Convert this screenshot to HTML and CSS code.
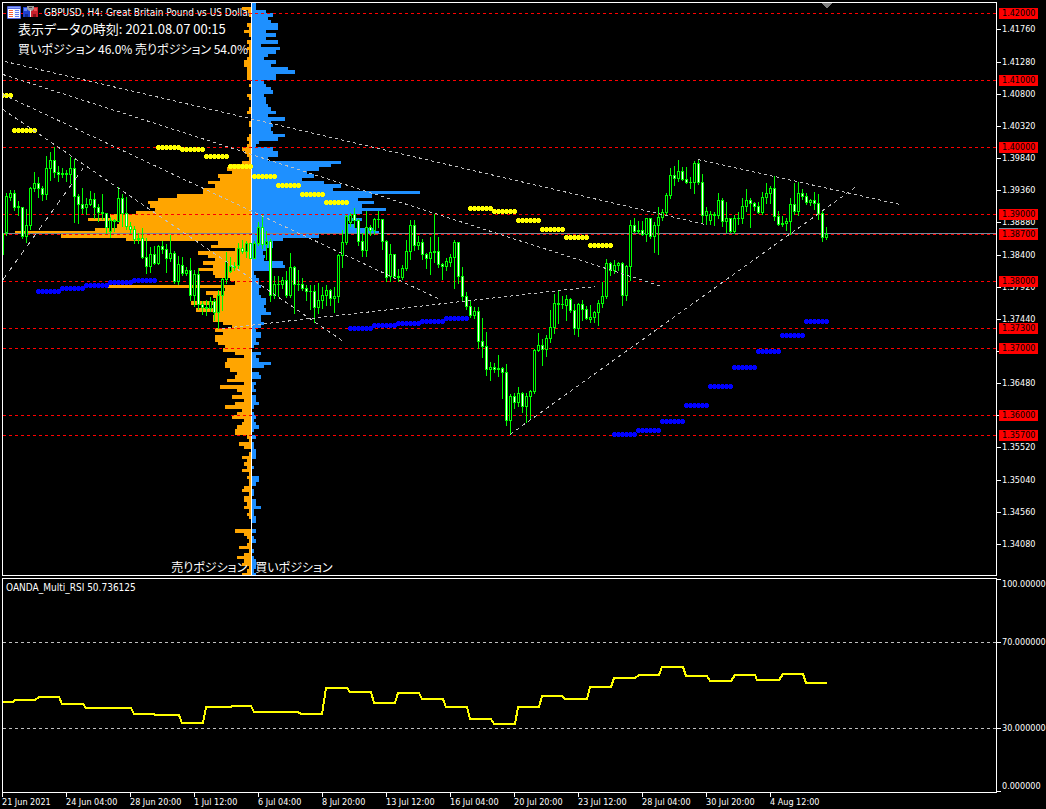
FILE: index.html
```html
<!DOCTYPE html>
<html lang="ja">
<head>
<meta charset="utf-8">
<meta name="viewport" content="width=device-width, initial-scale=1">
<title>GBPUSD, H4</title>
<link rel="stylesheet" href="styles.css">
</head>
<body>
<main class="terminal">
  <section class="pane pane-price" aria-label="GBPUSD H4">
    <div class="plot">
      <svg class="canvas" id="price" viewBox="3 3 993 572" preserveAspectRatio="none" aria-hidden="true"></svg>
      <header class="head">
        <div class="title-row">
          <button class="tool" type="button" aria-label="Depth of Market">
            <svg width="14" height="13" viewBox="0 0 14 13">
              <rect width="14" height="13" rx="1" fill="#5468e0"/>
              <rect x="1" y="1" width="12" height="1" fill="#86a4ff"/>
              <rect x="1" y="3" width="6" height="9" fill="#fff"/>
              <rect x="7" y="3" width="6" height="9" fill="#f2f4ff"/>
              <path d="M2 4.500h4M2 6.500h4M2 8.500h4M2 10.500h4" stroke="#f4603c"/>
              <path d="M8 4.500h4M8 6.500h4M8 8.500h4M8 10.500h4" stroke="#5f7cf4"/>
            </svg>
          </button>
          <button class="tool" type="button" aria-label="One Click Trading">
            <svg width="15" height="12" viewBox="0 0 15 12">
              <path d="M0 1h7v10H0z" fill="#2040d0"/>
              <path d="M8 1h7v10H8z" fill="#c8202c"/>
              <path d="M1 2h3v3H1z" fill="#5c86ff"/>
              <path d="M11 2h3v3h-3z" fill="#f05050"/>
              <path d="M4 0h7v3L9 5H6L4 3z" fill="#9c9c9c"/>
              <path d="M6 1h3v1H6z" fill="#404040"/>
              <path d="M7 4h1v7H7z" fill="#e4e4e4"/>
              <path d="M2 8h3v3H2z" fill="#102c90"/>
              <path d="M10 8h3v3h-3z" fill="#801018"/>
            </svg>
          </button>
          <h1 class="title">GBPUSD, H4: Great Britain Pound vs US Dollar</h1>
        </div>
        <p class="note">表示データの時刻: 2021.08.07 00:15</p>
        <p class="note note-ratio">買いポジション 46.0% 売りポジション 54.0%</p>
      </header>
      <footer class="sides">
        <span class="side-sell">売りポジション</span>
        <span class="side-buy">買いポジション</span>
      </footer>
    </div>
    <div class="scale" id="price-scale"></div>
  </section>
  <section class="pane pane-rsi" aria-label="OANDA Multi RSI">
    <div class="plot">
      <svg class="canvas" id="rsi" viewBox="3 579 993 213" preserveAspectRatio="none" aria-hidden="true"></svg>
      <h2 class="title title-rsi">OANDA_Multi_RSI 50.736125</h2>
    </div>
    <div class="scale" id="rsi-scale"></div>
  </section>
  <ol class="times">
    <li>21 Jun 2021</li><li>24 Jun 04:00</li><li>28 Jun 20:00</li><li>1 Jul 12:00</li>
    <li>6 Jul 04:00</li><li>8 Jul 20:00</li><li>13 Jul 12:00</li><li>16 Jul 04:00</li>
    <li>20 Jul 20:00</li><li>23 Jul 12:00</li><li>28 Jul 04:00</li><li>30 Jul 20:00</li>
    <li>4 Aug 12:00</li>
  </ol>
</main>
<script src="chart.js"></script>
</body>
</html>
```

FILE: styles.css
```css
* { box-sizing: border-box; }

body {
  margin: 0;
  background: #000;
  color: #fff;
  font: 9px/11px "DejaVu Sans Condensed", "DejaVu Sans", sans-serif;
}

h1, h2, p, ol { margin: 0; padding: 0; font: inherit; }

.terminal {
  display: flex;
  flex-direction: column;
  height: 100vh;
  padding: 2px 0 0 2px;
  overflow: hidden;
}

.pane {
  display: grid;
  grid-template-columns: minmax(0, 1fr) 49px;
  min-height: 0;
}
.pane-price { flex: 574 1 0; }
.pane-rsi { flex: 215 1 0; margin-top: 2px; }

.plot {
  position: relative;
  display: flex;
  flex-direction: column;
  justify-content: space-between;
  min-height: 0;
  border: 1px solid #fff;
}

.canvas {
  position: absolute;
  inset: 0;
  width: 100%;
  height: 100%;
  shape-rendering: crispEdges;
}

.head { padding: 3px 0 0 4px; }
.title-row { display: flex; align-items: flex-start; gap: 2px; height: 13px; }
.tool {
  display: flex;
  padding: 0;
  border: 0;
  background: none;
  position: relative;
}
.title { padding-left: 4px; font-size: 10px; line-height: 13px; white-space: nowrap; }
.title-rsi { padding: 2px 0 0 3px; }

.note, .sides {
  position: relative;
  font: 13px/20px "Noto Sans CJK JP", sans-serif;
  font-feature-settings: "palt";
}
.note { padding-left: 11px; }
.note-ratio, .sides { font-size: 12px; }
.sides { display: flex; line-height: 16px; }
.side-sell { width: 25%; padding-right: 4px; text-align: right; }
.side-buy { padding-left: 4px; }

.scale { position: relative; }
.mark {
  position: absolute;
  left: 0;
  display: flex;
  align-items: center;
  height: 11px;
  margin-top: -5px;
  padding-left: 5px;
}
.mark::before {
  content: "";
  position: absolute;
  left: 0;
  top: 5px;
  width: 4px;
  height: 1px;
  background: #fff;
}
.mark-first::before { top: 0; }
.mark-last::before { top: 10px; }
.level, .bid {
  position: absolute;
  left: 2px;
  width: 39px;
  height: 11px;
  margin-top: -5px;
  padding-left: 3px;
  background: #f00;
  color: #000;
}
.bid { background: #778899; }

.times {
  display: grid;
  grid-template-columns: repeat(13, minmax(0, 64fr)) minmax(0, 163fr);
  margin-right: 49px;
  height: 16px;
  list-style: none;
  white-space: nowrap;
}
.times li {
  padding-top: 4px;
  background: linear-gradient(#fff, #fff) 0 0 / 1px 4px no-repeat;
}
```

FILE: chart.js
```js
const NS = "http://www.w3.org/2000/svg";

function draw(svg, tag, attrs) {
  const el = document.createElementNS(NS, tag);
  for (const k in attrs) el.setAttribute(k, attrs[k]);
  svg.appendChild(el);
}
const rect = (svg, x, y, width, height, fill) => draw(svg, "rect", { x, y, width, height, fill });

const price = document.getElementById("price");

// Position profile: one row for each 0.0005, top to bottom
const ROW = 3.35, FIRST = 3.3, AXIS = 251;
const sell = [0,9,3,2,0,0,4,2,7,2,0,4,2,4,2,2,4,7,7,4,4,4,4,0,2,0,0,4,2,0,0,2,4,0,0,2,2,0,0,2,4,2,4,
  9,6,4,2,9,21,24,19,33,31,43,36,48,48,74,93,103,101,96,115,141,163,132,134,156,236,190,125,33,40,16,53,43,36,48,38,52,38,36,21,16,146,26,45,38,35,
  60,36,55,36,38,38,28,19,36,28,36,36,33,26,28,16,7,24,26,26,21,14,16,24,7,31,14,9,19,7,16,26,9,14,19,7,9,14,16,16,4,2,12,7,0,2,9,4,7,4,9,2,4,2,2,7,9,2,7,7,4,7,2,4,2,0,0,0,16,7,4,2,4,12,2,7,14,7,9,2,4,9];
const buy = [4,4,14,21,16,19,26,26,14,24,14,26,9,28,24,16,12,24,19,36,43,24,24,12,14,19,21,12,14,14,16,19,24,16,33,19,21,19,21,33,26,7,4,
  21,26,26,16,89,79,67,55,62,50,72,89,81,168,120,106,122,110,134,110,98,110,94,103,121,127,67,31,21,21,14,11,13,12,31,33,18,2,4,7,7,9,7,7,9,14,
  14,12,14,19,9,9,12,9,4,9,9,4,7,2,0,9,4,7,19,12,0,7,9,0,4,2,4,0,4,4,7,2,0,2,4,2,4,7,2,0,4,0,2,2,4,4,4,0,0,2,0,0,7,7,4,0,2,2,0,4,4,9,2,2,4,4,0,0,4,0,2,4,0,0,2,0,2,4,4,4,2,4];

function profile(widths, color, dir) {
  widths.forEach((w, i) => {
    if (!w) return;
    const y = Math.round(FIRST + i * ROW), h = Math.round(FIRST + (i + 1) * ROW) - y;
    rect(price, dir < 0 ? AXIS - w : AXIS + 1, y, w, h, color);
  });
}
profile(sell, "#ffa500", -1);
profile(buy, "#1e90ff", 1);
rect(price, AXIS, 3, 1, 572, "#fff");

// Horizontal levels
const yOf = p => Math.floor(13.81 + (1.42 - p) * 6700);
const levels = [1.42, 1.41, 1.4, 1.39, 1.387, 1.38, 1.373, 1.37, 1.36, 1.357];
const hline = (svg, y, stroke, dash) => draw(svg, "line", { x1: 3, x2: 996, y1: y + 0.5, y2: y + 0.5, stroke, "stroke-dasharray": dash });
hline(price, 233, "#778899", "none");
levels.forEach(p => hline(price, yOf(p), "#f00", "3 3"));

// Candles, 4 units apart: high, body top, body bottom, low, 1 = rising / 0 = falling
const candles = `233,233,254,254,1 193,196,232,235,1 190,193,197,200,1 190,193,207,210,0 201,206,207,215,1 207,207,236,238,0 209,225,236,242,1 187,188,225,229,1
172,183,188,191,1 177,183,188,197,0 186,188,194,200,0 156,168,194,199,1 152,160,168,180,1 147,160,172,177,0 166,172,174,181,0 168,173,174,177,1 170,173,174,181,0
157,168,174,183,1 159,168,196,222,0 194,196,204,223,0 188,204,208,213,0 198,204,207,214,1 191,199,204,205,1 193,199,207,218,0 204,207,212,221,0 194,212,213,219,0
213,213,227,233,0 217,220,231,237,1 219,220,221,231,1 187,198,221,221,1 194,198,213,226,0 197,213,226,229,0 222,226,229,233,0 226,229,239,243,0 233,238,239,243,1
228,238,257,258,0 238,257,266,273,0 247,254,266,272,1 246,254,263,264,0 245,246,263,264,1 241,246,249,253,0 244,249,258,272,0 235,253,258,261,1 251,253,281,283,0
256,264,281,284,1 257,265,273,275,0 267,270,273,275,1 258,270,295,300,0 270,274,295,306,1 268,274,304,309,0 301,304,307,314,0 300,307,308,315,0 297,301,308,311,1
299,301,312,320,0 290,295,312,328,1 278,279,295,310,1 252,261,279,283,1 257,266,271,272,1 262,266,267,270,1 243,248,265,269,1 240,248,251,253,0 241,243,251,257,1
243,243,258,258,0 241,243,258,258,1 222,227,243,245,1 215,227,244,248,0 231,241,244,259,1 239,241,295,301,0 276,284,295,298,1 276,284,284,296,1 277,280,284,288,1
271,280,295,297,0 253,267,295,297,1 266,267,284,313,0 270,284,284,290,0 278,284,288,290,0 285,288,291,300,0 285,291,291,309,0 285,291,307,322,0 283,300,307,313,1
287,295,300,308,1 285,290,295,305,1 289,290,298,305,0 287,296,298,312,1 254,255,296,302,1 230,242,255,267,1 215,216,242,244,1 213,215,222,226,1 208,214,220,227,0
219,220,241,245,0 233,241,250,256,0 211,227,250,256,1 225,227,230,235,0 218,219,230,234,1 211,219,219,227,1 219,219,241,249,0 240,241,277,281,0 244,254,276,281,1
254,254,276,278,0 269,276,277,281,0 265,268,277,279,1 240,251,268,270,1 220,225,251,259,1 220,225,245,250,0 236,242,245,249,1 239,242,254,259,0 253,254,258,268,0
237,252,258,274,1 214,251,252,262,1 237,251,264,267,0 263,264,266,279,0 258,261,266,270,1 254,257,262,266,1 240,242,257,288,1 242,242,276,283,0 267,276,296,301,0
292,296,306,309,0 300,306,315,317,0 307,311,315,318,1 307,311,341,348,0 318,341,346,357,0 332,346,369,375,0 362,367,369,380,1 363,367,369,372,0 355,368,369,376,0
367,368,372,398,0 364,372,420,425,0 394,396,420,434,1 393,396,402,408,0 387,393,402,406,1 392,393,406,412,0 393,396,406,422,1 390,391,396,419,1 349,350,391,393,1
333,345,350,351,1 339,345,349,365,0 335,338,349,356,1 310,327,338,342,1 294,303,327,333,1 290,303,304,323,0 296,304,304,308,0 295,299,305,320,1 298,299,310,312,0
304,310,328,334,0 303,304,328,336,1 300,304,309,320,0 306,309,318,319,0 305,317,319,322,1 311,312,317,322,1 300,303,312,325,1 282,296,303,307,1 259,263,296,298,1
262,263,270,275,0 260,265,270,273,1 262,263,265,270,1 262,263,295,305,0 265,266,295,300,1 220,225,266,280,1 218,225,231,232,0 221,230,231,233,1 221,230,234,235,0
218,218,234,241,1 218,218,236,238,0 222,225,236,252,1 207,217,225,254,1 209,212,217,220,1 193,195,212,214,1 168,175,195,198,1 166,175,178,185,0 160,171,178,181,1
167,171,179,180,0 167,179,182,183,0 177,182,182,188,1 161,163,182,193,1 159,163,182,184,0 174,182,215,222,0 207,211,215,224,1 211,214,220,224,1 212,214,215,225,0
193,200,215,218,1 198,200,221,226,0 202,218,221,232,1 218,218,231,232,0 215,218,231,233,1 212,218,218,224,1 198,206,218,223,1 189,200,206,211,1 198,200,203,227,0
202,203,206,210,0 202,206,212,213,0 192,197,212,214,1 183,193,197,203,1 186,188,193,203,1 176,188,216,220,0 211,216,224,225,0 216,223,224,226,1 218,221,223,230,1
198,204,221,234,1 183,204,211,214,0 182,193,211,215,1 189,193,196,199,0 193,196,202,204,0 199,200,202,205,1 192,200,203,209,0 194,203,213,219,0 210,213,237,241,0 227,234,237,239,1`
  .split(/\s+/).map(s => s.split(",").map(Number));

candles.forEach(([hi, top, bot, lo, up], i) => {
  const x = 2 + i * 4;
  rect(price, x, hi, 1, lo - hi + 1, "#0f0");
  rect(price, x - 1, top, 3, bot - top + 1, "#0f0");
  if (bot - top > 1) rect(price, x, top + 1, 1, bot - top - 1, up ? "#000" : "#fff");
});

// Daily stops, six dots each
function stops(list, color) {
  list.forEach(([x, y]) => {
    for (let k = 0; k < 6; k++) {
      draw(price, "circle", { cx: x + k * 4 + 0.5, cy: y + 0.5, r: 2.5, fill: color });
    }
  });
}
stops([[-10,95],[14,130],[158,147],[182,149],[206,156],[230,166],[254,176],[278,185],[302,194],[326,202],
  [470,208],[494,211],[518,220],[542,229],[566,237],[590,245]], "#ff0");
stops([[38,291],[62,288],[86,285],[110,282],[134,280],[350,328],[374,325],[398,323],[422,321],[446,318],
  [614,434],[638,430],[662,421],[686,405],[710,386],[734,367],[758,351],[782,335],[806,321]], "#00f");

// Trend lines
[[5,61,705,224],[3,74,662,286],[3,94,438,298],[3,109,342,340],[3,279,83,168],[222,328,595,286],
  [510,434,855,187],[698,159,900,204]].forEach(([x1, y1, x2, y2]) => {
  const stretch = Math.hypot(x2 - x1, y2 - y1) / (x2 - x1);
  draw(price, "line", { x1, y1: y1 + 0.5, x2, y2: y2 + 0.5, stroke: "#c0c0c0",
    "stroke-dasharray": `${3 * stretch} ${3 * stretch}` });
});

draw(price, "path", { d: "M821 3h11l-5 5h-1z", fill: "#808080" });

// Indicator
const rsi = document.getElementById("rsi");
hline(rsi, 642, "#c0c0c0", "3 3");
hline(rsi, 728, "#c0c0c0", "3 3");
draw(rsi, "polyline", {
  points: `2,702 13,702 15,700 35,700 39,697 59,697 62,704 83,704 86,708 131,708 134,714 154,714 155,715 179,715 182,723
    203,723 206,707 231,707 232,706 251,706 254,712 298,712 301,714 322,714 326,688 347,688 350,692 371,692 374,703 395,703
    398,693 419,693 422,699 443,699 446,707 467,707 470,719 491,719 494,724 515,724 518,707 539,707 542,696 562,696 565,699
    587,699 590,687 611,687 614,678 635,678 639,675 659,675 662,667 683,667 686,676 707,676 710,681 731,681 735,675 755,675
    757,680 779,680 783,674 803,674 806,683 827,683`,
  fill: "none", stroke: "#ff0", "stroke-width": 2
});

// Value scales
function label(host, text, cls, y, top, height) {
  const el = document.createElement("span");
  el.className = cls;
  el.textContent = text;
  el.style.top = `${(y - top) / height * 100}%`;
  host.appendChild(el);
}
const priceScale = document.getElementById("price-scale");
for (let k = 0; k < 17; k++) {
  const p = 1.4176 - k * 0.0048;
  label(priceScale, p.toFixed(5), "mark", yOf(p), 2, 574);
}
label(priceScale, "1.38710", "bid", 233, 2, 574);
levels.forEach(p => label(priceScale, p.toFixed(5), "level", yOf(p), 2, 574));

const rsiScale = document.getElementById("rsi-scale");
label(rsiScale, "100.000000", "mark mark-first", 584, 578, 215);
label(rsiScale, "70.000000", "mark", 642, 578, 215);
label(rsiScale, "30.000000", "mark", 728, 578, 215);
label(rsiScale, "0.000000", "mark mark-last", 786, 578, 215);
```
